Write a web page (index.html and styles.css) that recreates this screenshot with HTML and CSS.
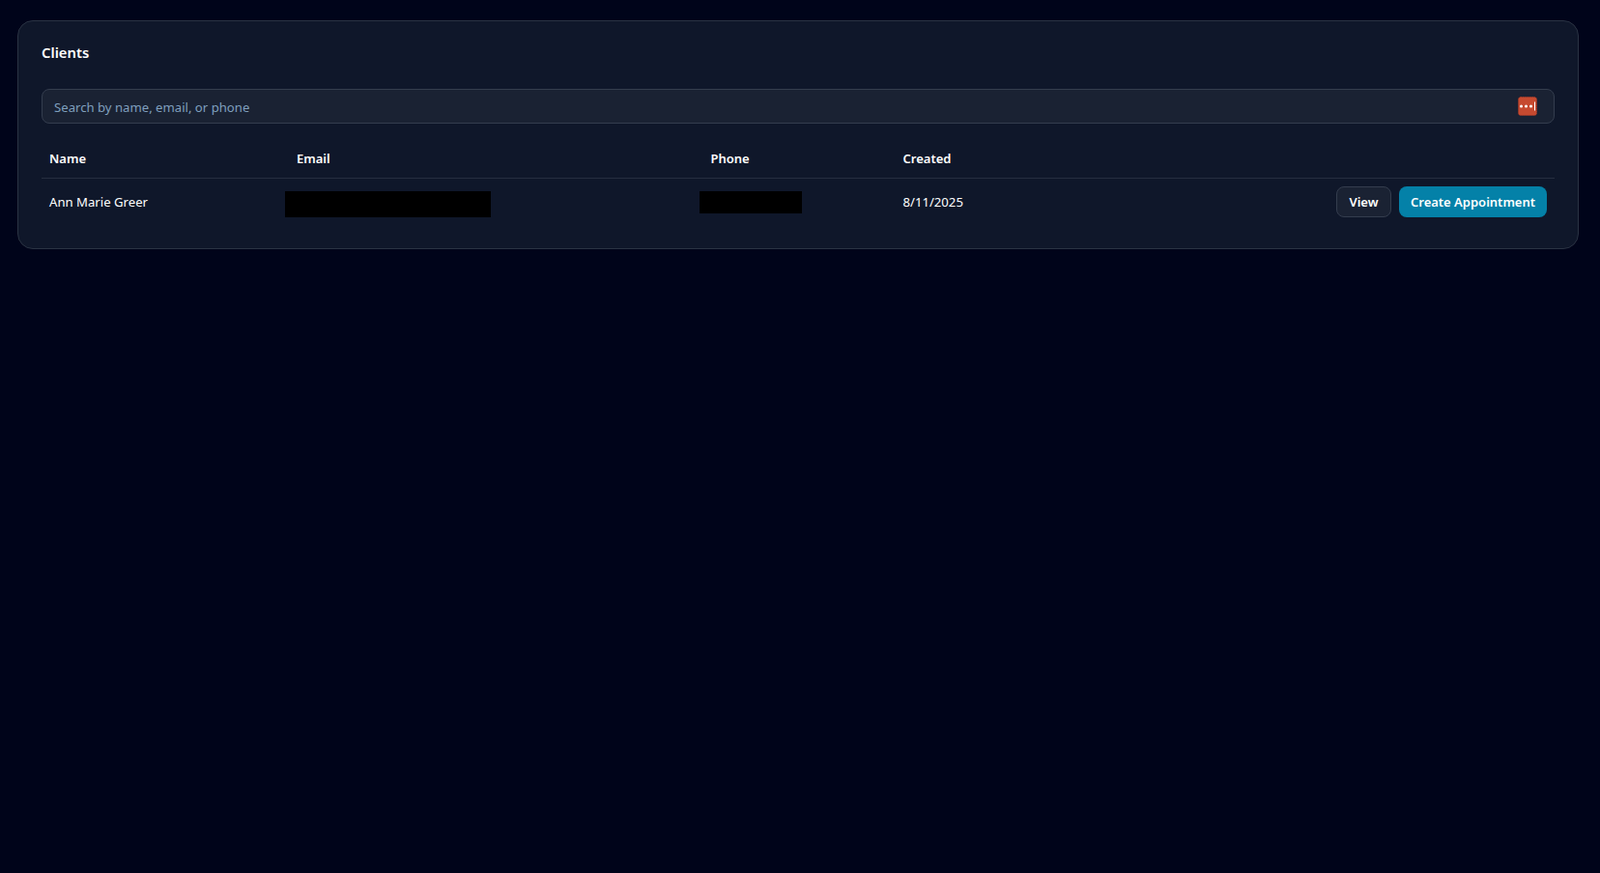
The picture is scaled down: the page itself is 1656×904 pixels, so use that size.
FILE: index.html
```html
<!DOCTYPE html>
<html lang="en">
<head>
<meta charset="utf-8">
<title>Clients</title>
<link rel="stylesheet" href="styles.css">
</head>
<body>
<main class="card">
  <h1 class="title">Clients</h1>
  <div class="search">
    <input class="search-input" type="text" placeholder="Search by name, email, or phone">
    <span class="pm-icon">
      <svg width="20" height="20" viewBox="0 0 20 20" aria-hidden="true">
        <rect x="0.5" y="0.5" width="19" height="19" rx="2.5" fill="#c64a30" stroke="#a83a28" stroke-dasharray="1 1"/>
        <circle cx="3.5" cy="10" r="1.5" fill="#fff"/>
        <circle cx="8.5" cy="10" r="1.5" fill="#fff"/>
        <circle cx="13.5" cy="10" r="1.5" fill="#fff"/>
        <rect x="17" y="5.5" width="1" height="9" fill="#fff"/>
      </svg>
    </span>
  </div>
  <table class="table">
    <colgroup>
      <col class="col-name"><col class="col-email"><col class="col-phone"><col class="col-created"><col>
    </colgroup>
    <thead>
      <tr><th>Name</th><th>Email</th><th>Phone</th><th>Created</th><th></th></tr>
    </thead>
    <tbody>
      <tr>
        <td class="cell-text">Ann Marie Greer</td>
        <td class="cell-redacted"><span class="redact redact-email"></span></td>
        <td class="cell-redacted"><span class="redact redact-phone"></span></td>
        <td class="cell-text">8/11/2025</td>
        <td class="actions">
          <button class="btn btn-outline" type="button">View</button>
          <button class="btn btn-primary" type="button">Create Appointment</button>
        </td>
      </tr>
    </tbody>
  </table>
</main>
</body>
</html>
```
FILE: styles.css
```css
* { box-sizing: border-box; }
html, body { height: 100%; }
body {
  margin: 0;
  padding: 21px 22px 0 18px;
  background: #00041a;
  color: #fff;
  font-family: "Noto Sans", "Open Sans", sans-serif;
  font-size: 13px;
}
.card {
  background: #0f172a;
  border: 1px solid #2a3343;
  border-radius: 16px;
  padding: 24px;
}
.title {
  margin: 0 0 30px;
  font-size: 14.8px;
  line-height: 16px;
  font-weight: 600;
}
.search {
  display: flex;
  align-items: center;
  height: 36px;
  padding: 0 17px 0 12px;
  background: #1a2233;
  border: 1px solid #343d4e;
  border-radius: 8px;
}
.search-input {
  flex: 1;
  min-width: 0;
  border: 0;
  outline: 0;
  padding: 1px 0 0;
  background: transparent;
  color: #fff;
  font: inherit;
  font-size: 13.15px;
}
.search-input::placeholder { color: #7f9fbd; opacity: 1; }
.pm-icon { display: flex; }
.table {
  width: 100%;
  margin-top: 16px;
  border-collapse: collapse;
  table-layout: fixed;
}
.col-name { width: 256px; }
.col-email { width: 428.5px; }
.col-phone { width: 199px; }
.col-created { width: 200px; }
th {
  height: 40px;
  padding: 0 8px;
  text-align: left;
  font-weight: 600;
  border-bottom: 1px solid #262e3f;
}
td {
  height: 48px;
  padding: 0 8px;
}
.cell-text { font-size: 13.15px; }
.cell-redacted { position: relative; }
.redact {
  position: absolute;
  top: 13px;
  left: -4px;
  background: #000;
}
.redact-email { width: 213px; height: 27px; }
.redact-phone { width: 106px; height: 23px; }
.actions {
  display: flex;
  justify-content: flex-end;
  align-items: center;
  gap: 8px;
}
.btn {
  height: 32px;
  border-radius: 8px;
  font: inherit;
  font-weight: 600;
  color: #fff;
}
.btn-outline {
  width: 57px;
  padding: 0;
  background: #1a2233;
  border: 1px solid #343d4e;
}
.btn-primary {
  width: 153px;
  padding: 0;
  background: #0481a8;
  border: 0;
}
```
